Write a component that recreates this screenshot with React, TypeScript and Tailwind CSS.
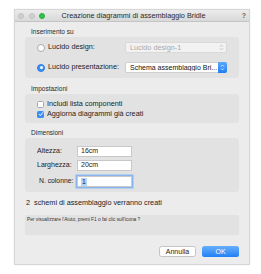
import React from "react";

const font = { fontFamily: '"Liberation Sans", Arial, sans-serif' };

function Radio({ checked }: { checked?: boolean }) {
  return checked ? (
    <div className="w-[8px] h-[8px] shrink-0 rounded-full bg-[#3b8ef5] border border-[#2f7fe6] flex items-center justify-center">
      <div className="w-[3px] h-[3px] rounded-full bg-white" />
    </div>
  ) : (
    <div className="w-[8px] h-[8px] shrink-0 rounded-full bg-white border border-[#a9a9a9]" />
  );
}

function Checkbox({ checked }: { checked?: boolean }) {
  return checked ? (
    <div className="w-[7px] h-[7px] shrink-0 rounded-[1.5px] bg-[#3b8ef5] flex items-center justify-center">
      <svg width="6" height="6" viewBox="0 0 6 6">
        <path d="M1 3.1 L2.4 4.5 L5 1.3" stroke="white" strokeWidth="1" fill="none" />
      </svg>
    </div>
  ) : (
    <div className="w-[7px] h-[7px] shrink-0 rounded-[1.5px] bg-white border border-[#a9a9a9]" />
  );
}

function Chevrons({ color }: { color: string }) {
  return (
    <svg width="5" height="7" viewBox="0 0 5 7" className="shrink-0">
      <path d="M1 2.6 L2.5 1.1 L4 2.6 M1 4.4 L2.5 5.9 L4 4.4" stroke={color} strokeWidth="0.8" fill="none" />
    </svg>
  );
}

export default function App() {
  return (
    <div className="w-[261px] h-[274px] bg-white text-[#222] pl-[14px] pt-[9px]" style={font}>
      <div className="w-[236px] h-[256px] bg-[#ececec] border border-[#d6d6d6] flex flex-col shadow-[0_0_2px_rgba(0,0,0,0.08)]">
        {/* Title bar */}
        <div className="relative h-[12px] shrink-0 bg-gradient-to-b from-[#ececec] to-[#d8d8d8] border-b border-[#c4c4c4] flex items-center justify-center">
          <div className="absolute left-[3px] top-[2.5px] flex gap-[4.5px]">
            <div className="w-[6px] h-[6px] rounded-full bg-[#d0d0d0] border border-[#c2c2c2]" />
            <div className="w-[6px] h-[6px] rounded-full bg-[#d0d0d0] border border-[#c2c2c2]" />
            <div className="w-[6px] h-[6px] rounded-full bg-[#2fc545] border border-[#27ae3c]" />
          </div>
          <span className="text-[7.25px] leading-none text-[#2a2a2a] ml-[3px] whitespace-nowrap">Creazione diagrammi di assemblaggio Bridle</span>
          <span className="absolute right-[3px] top-[2px] text-[7px] leading-none font-bold text-[#666]">?</span>
        </div>

        <div className="flex flex-col px-[10px]">
          {/* Inserimento su */}
          <div className="h-[15px] flex items-end pb-[1px] pl-[6px] text-[6.5px] leading-[9px] text-[#2a2a2a]">Inserimento su</div>
          <div className="h-[41px] bg-[#e2e2e2] rounded-[3px] flex flex-col pt-[5px] gap-[9px]">
            <div className="h-[11px] flex items-center">
              <div className="w-[12px] shrink-0" />
              <Radio />
              <span className="ml-[3px] text-[7.25px] w-[74px] shrink-0 whitespace-nowrap">Lucido design:</span>
              <div className="ml-[3px] w-[102px] h-[11px] shrink-0 bg-[#f2f2f2] border border-[#d9d9d9] rounded-[2px] flex items-center justify-between pl-[4px] pr-[2px]">
                <span className="text-[7.25px] text-[#a9a9a9] leading-none whitespace-nowrap">Lucido design-1</span>
                <Chevrons color="#b0b0b0" />
              </div>
            </div>
            <div className="h-[11px] flex items-center">
              <div className="w-[12px] shrink-0" />
              <Radio checked />
              <span className="ml-[3px] text-[7.25px] w-[74px] shrink-0 whitespace-nowrap">Lucido presentazione:</span>
              <div className="ml-[3px] w-[102px] h-[11px] shrink-0 bg-white border border-[#cfcfcf] rounded-[2px] flex items-center justify-between pl-[4px]">
                <span className="text-[7px] text-[#111] leading-none whitespace-nowrap overflow-hidden">Schema assemblaggio Bri...</span>
                <div className="w-[9px] h-[11px] shrink-0 -mr-[1px] rounded-r-[2px] bg-gradient-to-b from-[#5aa8fb] to-[#1b7ef4] flex items-center justify-center">
                  <Chevrons color="#ffffff" />
                </div>
              </div>
            </div>
          </div>

          {/* Impostazioni */}
          <div className="h-[16px] flex items-end pb-[1px] pl-[6px] text-[6.5px] leading-[9px] text-[#2a2a2a]">Impostazioni</div>
          <div className="h-[29px] bg-[#e2e2e2] rounded-[3px] flex flex-col pt-[5px]">
            <div className="h-[10px] flex items-center pl-[12px]">
              <Checkbox />
              <span className="ml-[3px] text-[7.25px] whitespace-nowrap">Includi lista componenti</span>
            </div>
            <div className="h-[10px] flex items-center pl-[12px]">
              <Checkbox checked />
              <span className="ml-[3px] text-[7.25px] whitespace-nowrap">Aggiorna diagrammi già creati</span>
            </div>
          </div>

          {/* Dimensioni */}
          <div className="h-[15px] flex items-end pb-[1px] pl-[6px] text-[6.5px] leading-[9px] text-[#2a2a2a]">Dimensioni</div>
          <div className="h-[54px] bg-[#e2e2e2] rounded-[3px] flex flex-col pt-[8px]">
            <div className="h-[11px] flex items-center">
              <span className="pl-[12px] w-[52px] shrink-0 text-[7px] whitespace-nowrap">Altezza:</span>
              <div className="w-[55px] h-[11px] bg-white border border-[#c8c8c8] flex items-center pl-[3px] text-[7px]">16cm</div>
            </div>
            <div className="h-[11px] mt-[3px] flex items-center">
              <span className="pl-[12px] w-[52px] shrink-0 text-[7px] whitespace-nowrap">Larghezza:</span>
              <div className="w-[55px] h-[11px] bg-white border border-[#c8c8c8] flex items-center pl-[3px] text-[7px]">20cm</div>
            </div>
            <div className="h-[11px] mt-[5px] flex items-center">
              <span className="pl-[14px] w-[52px] shrink-0 text-[6.8px] whitespace-nowrap">N. colonne:</span>
              <div className="w-[55px] h-[11px] bg-white border border-[#c8c8c8] ring-[1.5px] ring-[#8ab6ef] flex items-center pl-[3px] text-[7px]">
                <span className="bg-[#b4d3fb] px-[1px] leading-[8px]">1</span>
              </div>
            </div>
          </div>

          {/* Status */}
          <div className="h-[23px] flex items-center pl-[1px] text-[7.25px] whitespace-pre">2  schemi di assemblaggio verranno creati</div>

          {/* Help */}
          <div className="h-[20px] bg-[#e2e2e2] rounded-[2px] pl-[2px] pt-[3px] text-[4.8px] leading-none text-[#333] whitespace-nowrap">
            Per visualizzare l'Aiuto, premi F1 o fai clic sull'icona ?
          </div>

          {/* Buttons */}
          <div className="mt-[11px] flex justify-end gap-[6px]">
            <div className="w-[37px] h-[11px] bg-white border border-[#c4c4c4] rounded-[2.5px] flex items-center justify-center text-[7px] leading-none">Annulla</div>
            <div className="w-[37px] h-[11px] rounded-[2.5px] bg-gradient-to-b from-[#67aefb] to-[#1d80f5] flex items-center justify-center text-[7px] leading-none text-white">OK</div>
          </div>
        </div>
      </div>
    </div>
  );
}
